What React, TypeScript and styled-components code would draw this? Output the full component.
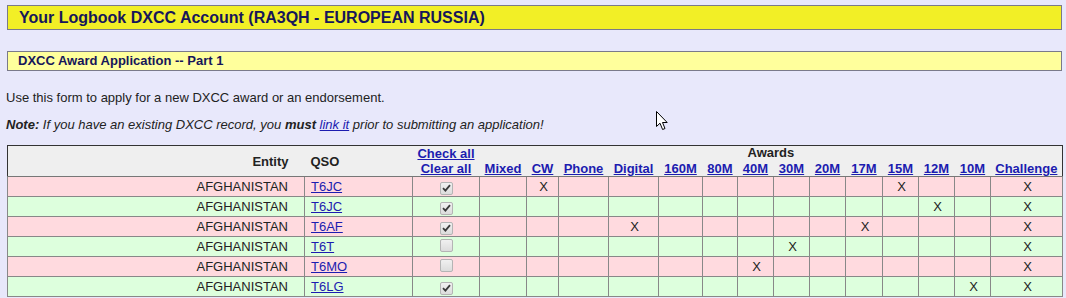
import React from "react";
import styled, { createGlobalStyle } from "styled-components";

const GlobalStyle = createGlobalStyle`
  html, body {
    margin: 0;
    padding: 0;
    background: #e8e8fb;
    font-family: "Liberation Sans", Arial, sans-serif;
  }
`;

type Row = { entity: string; qso: string; checked: boolean; marks: string[] };

const awards = ["Mixed", "CW", "Phone", "Digital", "160M", "80M", "40M", "30M", "20M", "17M", "15M", "12M", "10M", "Challenge"];
const awardWidths = [47, 32, 50, 50, 44, 35, 36, 36, 36, 37, 36, 36, 36, 72];

const rows: Row[] = [
  { entity: "AFGHANISTAN", qso: "T6JC", checked: true, marks: ["CW", "15M", "Challenge"] },
  { entity: "AFGHANISTAN", qso: "T6JC", checked: true, marks: ["12M", "Challenge"] },
  { entity: "AFGHANISTAN", qso: "T6AF", checked: true, marks: ["Digital", "17M", "Challenge"] },
  { entity: "AFGHANISTAN", qso: "T6T", checked: false, marks: ["30M", "Challenge"] },
  { entity: "AFGHANISTAN", qso: "T6MO", checked: false, marks: ["40M", "Challenge"] },
  { entity: "AFGHANISTAN", qso: "T6LG", checked: true, marks: ["10M", "Challenge"] },
];

const App = () => {
  return (
    <>
      <GlobalStyle />
      <Page>
        <TitleBox>Your Logbook DXCC Account (RA3QH - EUROPEAN RUSSIA)</TitleBox>
        <SubBox>DXCC Award Application -- Part 1</SubBox>
        <Para>Use this form to apply for a new DXCC award or an endorsement.</Para>
        <Para $italic>
          <b>Note:</b> If you have an existing DXCC record, you <b>must</b> <Link href="#">link it</Link> prior to submitting an application!
        </Para>
        <Table>
          <colgroup>
            <col style={{ width: 297 }} />
            <col style={{ width: 108 }} />
            <col style={{ width: 67 }} />
            {awardWidths.map((w, i) => (
              <col key={i} style={{ width: w }} />
            ))}
          </colgroup>
          <thead>
            <tr>
              <HeadCell rowSpan={2} $align="right" $padRight={16}>Entity</HeadCell>
              <HeadCell rowSpan={2} $align="left">QSO</HeadCell>
              <CheckHead rowSpan={2}>
                <HeadLink href="#">Check all</HeadLink>
                <br />
                <HeadLink href="#">Clear all</HeadLink>
              </CheckHead>
              <AwardsCell colSpan={awards.length}>Awards</AwardsCell>
            </tr>
            <tr>
              {awards.map(a => (
                <AwardHead key={a}>
                  <HeadLink href="#">{a}</HeadLink>
                </AwardHead>
              ))}
            </tr>
          </thead>
          <tbody>
            {rows.map((r, i) => (
              <BodyRow key={i} $odd={i % 2 === 0}>
                <Cell $align="right" $padRight={16}>{r.entity}</Cell>
                <Cell $align="left">
                  <Link href="#">{r.qso}</Link>
                </Cell>
                <Cell>
                  <CheckBox $checked={r.checked}>
                    {r.checked && (
                      <svg width="9" height="8" viewBox="0 0 9 8">
                        <path d="M1 4.2 L3.4 6.6 L8 1.2" fill="none" stroke="#3a3a3a" strokeWidth="1.8" />
                      </svg>
                    )}
                  </CheckBox>
                </Cell>
                {awards.map(a => (
                  <Cell key={a}>{r.marks.includes(a) ? "X" : ""}</Cell>
                ))}
              </BodyRow>
            ))}
          </tbody>
        </Table>
        <Cursor width="13" height="20" viewBox="0 0 13 20">
          <path d="M0.5 0.5 L0.5 15.5 L4 12.2 L6.6 18.5 L9 17.5 L6.5 11.5 L11.2 11.5 Z" fill="#fff" stroke="#000" strokeWidth="1" strokeLinejoin="round" />
        </Cursor>
      </Page>
    </>
  );
};

export default App;

const Page = styled.div`
  position: relative;
  padding: 5px 4px 0 7px;
  height: 298px;
  box-sizing: border-box;
  overflow: hidden;
`;
const TitleBox = styled.div`
  height: 23px;
  line-height: 23px;
  border: 1px solid #7a7a8a;
  background: #f2ef26;
  color: #16165a;
  font-size: 16px;
  font-weight: bold;
  padding-left: 11px;
`;
const SubBox = styled.div`
  margin-top: 21px;
  height: 18px;
  line-height: 18px;
  border: 1px solid #7a7a8a;
  background: #ffff9c;
  color: #16165a;
  font-size: 13px;
  font-weight: bold;
  padding-left: 10px;
`;
const Para = styled.p<{ $italic?: boolean }>`
  margin: 0;
  margin-top: ${p => (p.$italic ? "12px" : "19px")};
  font-size: 13px;
  line-height: 15px;
  color: #222;
  font-style: ${p => (p.$italic ? "italic" : "normal")};
  margin-left: -1px;
`;
const Link = styled.a`
  color: #1c1cb0;
  text-decoration: underline;
`;
const Table = styled.table`
  margin-top: 13px;
  width: 1055px;
  table-layout: fixed;
  border-collapse: collapse;
  border: 1px solid #333;
  font-size: 13px;
  color: #222;
`;
const HeadCell = styled.th<{ $align?: string; $padRight?: number }>`
  background: #efefef;
  font-weight: bold;
  text-align: ${p => p.$align || "center"};
  padding: 0 ${p => p.$padRight ?? 4}px 0 6px;
  line-height: 15px;
  vertical-align: middle;
  border-bottom: 1px solid #777;
`;
const CheckHead = styled.th`
  background: #efefef;
  text-align: center;
  padding: 0;
  line-height: 15px;
  white-space: nowrap;
  vertical-align: top;
  border-bottom: 1px solid #777;
`;
const AwardsCell = styled.th`
  background: #efefef;
  font-weight: bold;
  text-align: center;
  padding: 0;
  height: 14px;
  line-height: 14px;
  vertical-align: bottom;
`;
const AwardHead = styled.th`
  background: #efefef;
  text-align: center;
  padding: 0;
  height: 15px;
  line-height: 15px;
  vertical-align: bottom;
  border-bottom: 1px solid #777;
  white-space: nowrap;
`;
const HeadLink = styled.a`
  color: #1c1cb0;
  font-weight: bold;
  text-decoration: underline;
`;
const BodyRow = styled.tr<{ $odd: boolean }>`
  background: ${p => (p.$odd ? "#ffdadf" : "#ddffdd")};
`;
const Cell = styled.td<{ $align?: string; $padRight?: number }>`
  height: 19px;
  padding: 0 ${p => p.$padRight ?? 4}px 0 6px;
  text-align: ${p => p.$align || "center"};
  border: 1px solid #888;
  line-height: 17px;
  white-space: nowrap;
  vertical-align: middle;
`;
const CheckBox = styled.span<{ $checked: boolean }>`
  display: inline-flex;
  align-items: center;
  justify-content: center;
  width: 11px;
  height: 11px;
  margin-left: -2px;
  vertical-align: -1px;
  border: 1px solid #b4b4b4;
  border-radius: 2px;
  background: linear-gradient(#f0f0f0, #dcdcdc);
`;
const Cursor = styled.svg`
  position: absolute;
  left: 656px;
  top: 111px;
`;
